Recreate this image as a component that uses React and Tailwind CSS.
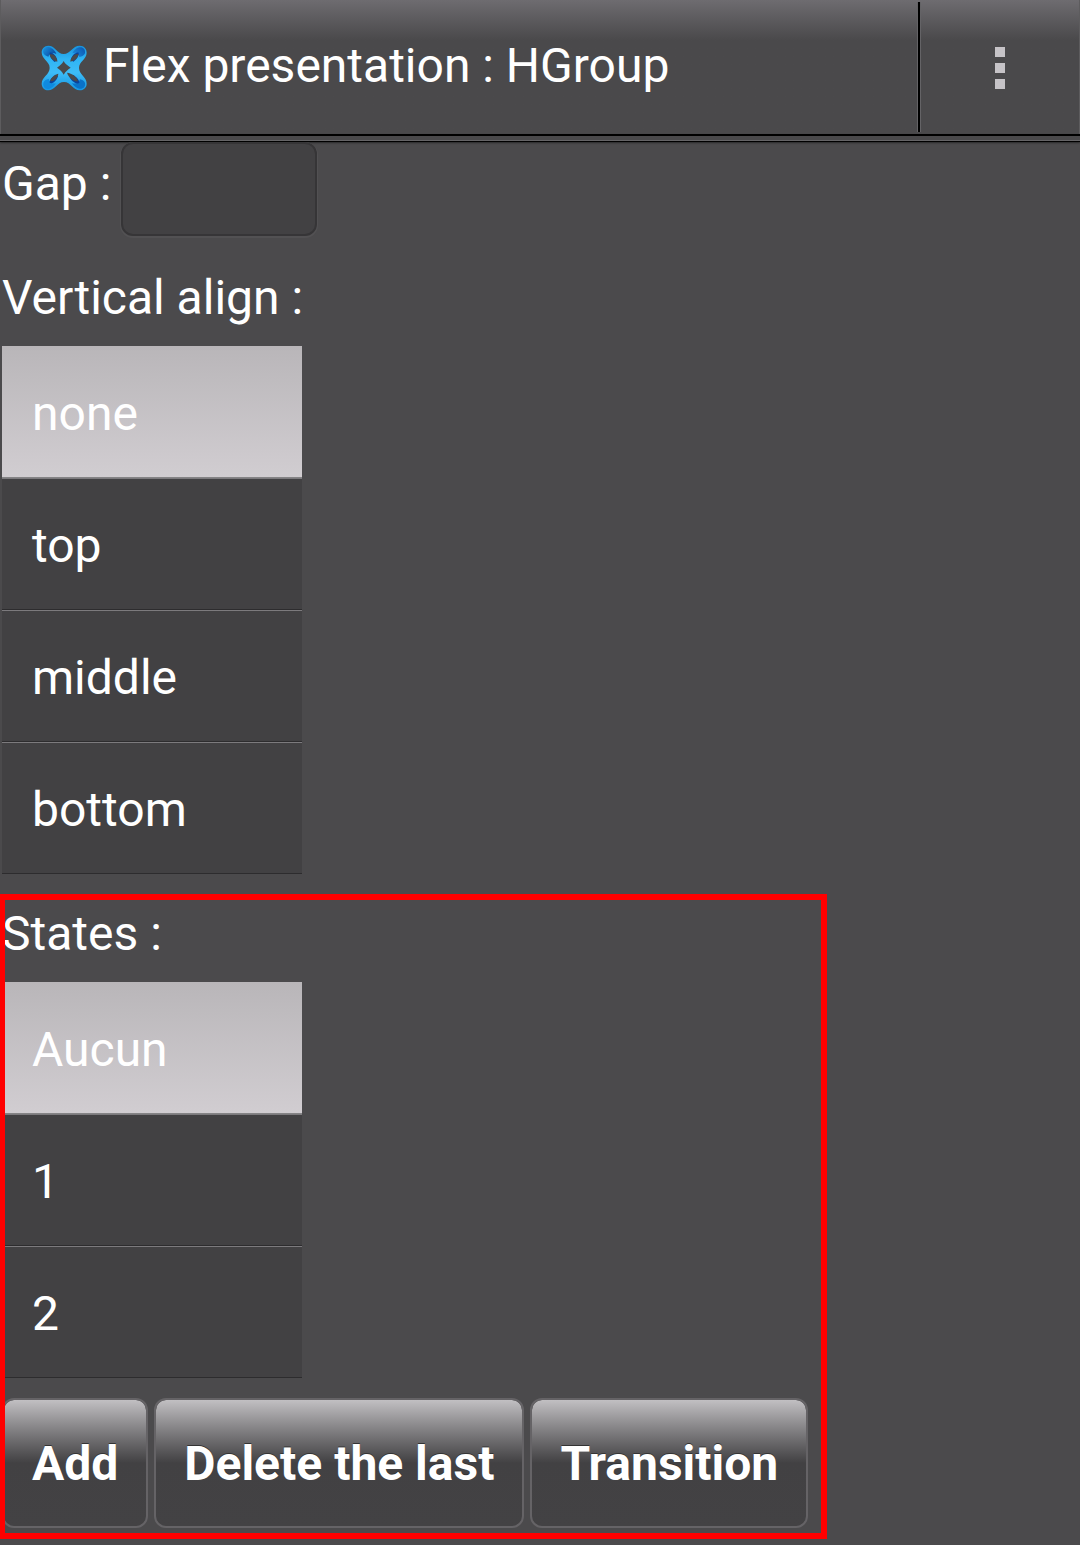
import React, { useState } from 'react';

const Logo = () => (
  <svg className="w-[46px] h-[46px] shrink-0" viewBox="34 31 138 138" aria-hidden="true">
    <defs>
      <linearGradient id="body" x1="0" y1="0" x2="0" y2="1">
        <stop offset="0" stopColor="#1792dc" />
        <stop offset="0.3" stopColor="#2fb4f4" />
        <stop offset="0.6" stopColor="#3dbdf8" />
        <stop offset="1" stopColor="#1596e2" />
      </linearGradient>
      <linearGradient id="lobeLeft" x1="0" y1="0" x2="1" y2="0.6">
        <stop offset="0" stopColor="#1a93e0" />
        <stop offset="1" stopColor="#0a479f" />
      </linearGradient>
      <linearGradient id="lobeRight" x1="1" y1="0" x2="0" y2="0.6">
        <stop offset="0" stopColor="#0b55b0" />
        <stop offset="1" stopColor="#1a86d8" />
      </linearGradient>
    </defs>
    <path
      fill="url(#body)"
      d="M56 33C78 33 82 58 102 58S128 33 150 33C164 33 171 43 171 54C171 74 148 80 148 100S171 126 171 147C171 159 162 167 150 167C130 167 124 142 103 142S76 167 56 167C44 167 36 158 36 147C36 127 60 120 60 100S36 74 36 53C36 42 44 33 56 33Z"
    />
    <path fill="url(#lobeLeft)" d="M41 55C38 43 48 35 59 38C68 40 77 49 80 58C70 52 60 54 56 66C49 64 43 61 41 55Z" />
    <path fill="url(#lobeRight)" d="M166 56C168 44 160 36 149 38C139 40 132 47 128 56C139 51 147 55 149 67C157 66 164 62 166 56Z" />
    <path fill="#0f8ade" d="M41 145C39 157 48 165 59 162C67 160 74 154 79 146C69 148 61 146 57 133C49 135 43 138 41 145Z" />
    <path fill="#0a72c8" d="M166 145C168 157 159 164 149 162C140 160 133 155 127 146C139 148 148 146 151 134C158 136 164 139 166 145Z" />
    <path fill="#0b429b" d="M60 54C69 51 80 64 83 77L75 82C68 75 59 67 60 54ZM147 54C138 51 126 63 123 77L132 81C139 74 148 66 147 54ZM60 144C70 150 82 136 85 124L77 120C69 128 59 134 60 144ZM149 145C138 150 124 139 119 125L131 121C140 128 149 134 149 145Z" />
    <path fill="#4a4a4c" d="M60 59C73 56 83 68 83 81C71 79 62 71 60 59ZM147 58C135 56 123 67 122 81C134 79 144 71 147 58ZM62 140C74 140 84 131 86 117C73 121 63 129 62 140ZM145 140C133 142 118 131 112 114C127 116 141 125 145 140Z" />
    <path fill="#4a4a4c" d="M102 79C106 88 113 92 123 99C113 106 108 110 102 120C97 110 91 105 82 99C92 92 97 88 102 79Z" />
  </svg>
);

const OptionList = ({ label, options }) => {
  const [selected, setSelected] = useState(options[0]);

  return (
    <ul aria-label={label} className="ml-[2px] w-[300px]">
      {options.map((option) => (
        <li key={option}>
          <button
            type="button"
            aria-pressed={selected === option}
            onClick={() => setSelected(option)}
            className={`block w-full h-[132px] pt-1 pl-[30px] text-left border-t border-b border-b-[#2d2c2e] ${
              selected === option
                ? 'bg-linear-to-b from-[#b9b6b9] to-[#d1cdd1] border-t-[#b9b6b9] border-b-[#858486]'
                : 'bg-[#424143] border-t-[#7c7a7d]'
            }`}
          >
            {option}
          </button>
        </li>
      ))}
    </ul>
  );
};

const ActionButton = ({ children }) => (
  <button
    type="button"
    className="h-[130px] px-7 pt-[2px] rounded-xl border-2 border-[#656366] bg-[#434244] bg-linear-to-b from-[#c6c4c7] from-0% via-[#424143] via-50% to-[#434244] bg-origin-border bg-clip-padding font-bold whitespace-nowrap text-shadow-[0_-1px_0_#333333]"
  >
    {children}
  </button>
);

const App = () => {
  return (
    <div className="min-h-screen bg-[#4b4a4c] text-white font-[Roboto,sans-serif] text-[48px] leading-[56px]">
      <header>
        <div className="flex h-[134px] bg-linear-to-b from-[#6e6c70] via-[#4a494b] via-30% to-[#4a494b] border-x border-[#5d5c5e]">
          <div className="flex flex-1 items-center gap-4 pt-[2px] pl-10">
            <Logo />
            <h1 className="pb-1">Flex presentation : HGroup</h1>
          </div>
          <div className="my-[2px] w-1 bg-black border-x border-[#646366]" />
          <button type="button" aria-label="Menu" className="flex w-[158px] flex-col items-center justify-center gap-[6px] pt-[2px]">
            <span className="size-[10px] bg-[#c6c3c7]" />
            <span className="size-[10px] bg-[#c6c3c7]" />
            <span className="size-[10px] bg-[#c6c3c7]" />
          </button>
        </div>
        <div className="h-2 bg-[#4a494b] border-t-2 border-b border-black shadow-[inset_0_-1px_0_#656466,0_1px_2px_#2b2b2b]" />
      </header>

      <main>
        <div className="flex items-start">
          <label htmlFor="gap" className="w-[121px] pt-[14px] pl-[2px]">Gap :</label>
          <input
            id="gap"
            type="text"
            className="h-[94px] w-[196px] rounded-xl border-2 border-[#363537] bg-[#424143] px-4 shadow-[0_1px_0_1px_#525153]"
          />
        </div>

        <h2 className="mt-[34px] mb-5 pl-[2px]">Vertical align :</h2>
        <OptionList label="Vertical align" options={['none', 'top', 'middle', 'bottom']} />

        <section className="relative mt-5 w-fit pt-3 pb-[11px]">
          <h2 className="mb-5 pl-[2px]">States :</h2>
          <OptionList label="States" options={['Aucun', '1', '2']} />
          <div className="mt-5 ml-[2px] mr-[19px] flex gap-[6px]">
            <ActionButton>Add</ActionButton>
            <ActionButton>Delete the last</ActionButton>
            <ActionButton>Transition</ActionButton>
          </div>
          {/* highlight frame sits over the content */}
          <div className="pointer-events-none absolute inset-0 border-6 border-l-5 border-[#ff0000]" />
        </section>
      </main>
    </div>
  );
};

export default App;
